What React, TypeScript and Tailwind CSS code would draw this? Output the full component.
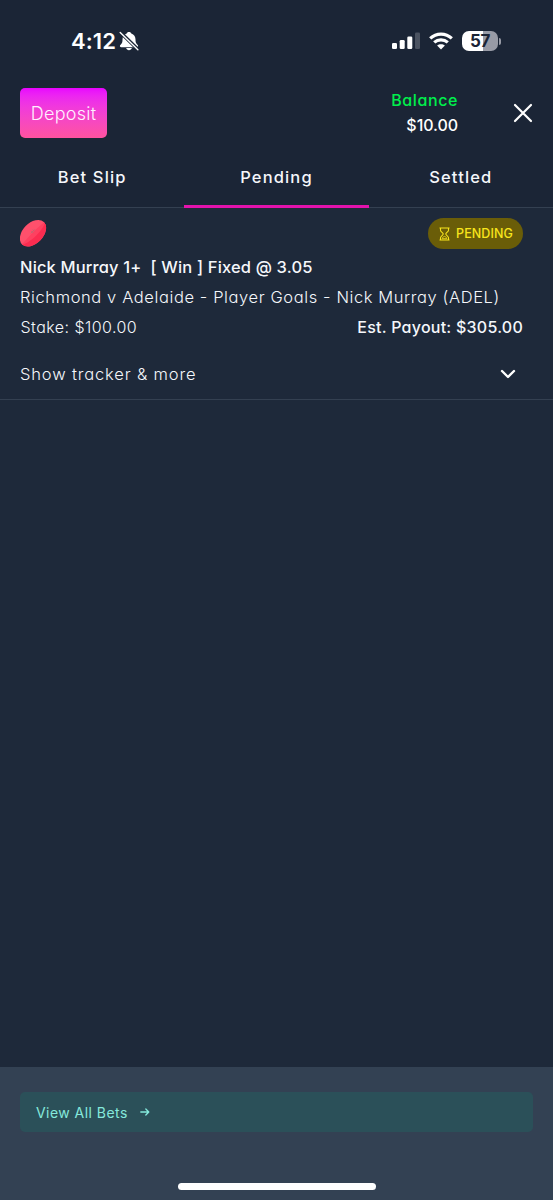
import type { ReactNode } from "react";

function BellOff() {
  return (
    <svg width="20" height="20" viewBox="0 0 20 20" className="block">
      <path
        d="M10 .9c-1.300 0-2.100.7-2.300 1.700C4.900 3.500 3.500 5.800 3.500 8.600c0 2.900-.4 3.700-1.700 5-.6.6-.9 1-.9 1.500 0 .6.500 1.100 1.200 1.100h15.800c.7 0 1.200-.5 1.200-1.100 0-.5-.3-.9-.9-1.500-1.300-1.300-1.700-2.100-1.700-5 0-2.800-1.400-5.100-4.200-6C12.100 1.600 11.300.9 10 .9zM7.200 17.100c.3 1.300 1.400 2.200 2.800 2.200s2.500-.9 2.800-2.200z"
        fill="#fff"
      />
      <path d="M1.600 1.500L19 18.500" stroke="#1b2536" strokeWidth="3.600" />
      <path d="M1.200 1.600L18.900 18.800" stroke="#fff" strokeWidth="1.400" strokeLinecap="round" />
    </svg>
  );
}

function Signal() {
  return (
    <svg width="28" height="18" viewBox="0 0 28 18" fill="#fff" className="block">
      <rect x="0" y="11" width="5" height="6" rx="1.300" />
      <rect x="7.700" y="8" width="5" height="9" rx="1.300" />
      <rect x="15.300" y="4.500" width="5" height="12.500" rx="1.300" />
      <rect x="23" y="0.500" width="5" height="16.500" rx="1.300" fill="#4b5361" />
    </svg>
  );
}

function Wifi() {
  return (
    <svg width="24" height="18" viewBox="0 0 24 18" fill="none" stroke="#fff" strokeWidth="3.200" className="block">
      <path d="M1.200 6.300C7.300.6 16.700.6 22.800 6.300" />
      <path d="M5.200 10.400c3.900-3.500 9.700-3.500 13.600 0" />
      <path d="M12 17.600L8.100 13.600c2.200-1.900 5.600-1.900 7.800 0z" fill="#fff" stroke="none" />
    </svg>
  );
}

function Battery() {
  return (
    <div className="flex items-center gap-px">
      <div className="flex h-[20px] w-[36px] items-center justify-center rounded-[7px] bg-[linear-gradient(90deg,#fff_57%,#989ba6_57%)] text-[17px] leading-none font-bold tracking-[-0.5px] text-[#1b2435]">
        57
      </div>
      <div className="h-[7px] w-[2px] rounded-r-full bg-[#989ba6]" />
    </div>
  );
}

function Football() {
  return (
    <svg width="27" height="28" viewBox="0 0 27 28" className="block">
      <defs>
        <clipPath id="ball">
          <ellipse rx="15.600" ry="10.200" transform="translate(13 14.200) rotate(-46)" />
        </clipPath>
      </defs>
      <g clipPath="url(#ball)">
        <rect width="27" height="28" fill="#ff506c" />
        <path d="M0 27.500L27 1v27z" fill="#fb2c50" />
        <path d="M1 26.500C10 23.500 23 12.500 25.500 2L14 12z" fill="#ff4060" />
      </g>
      <path d="M10.800 14.300l3.800-3.800M11.300 12l2.300 2.300M12.800 10.500l1.900 1.900" stroke="#c9616f" strokeWidth="1" />
    </svg>
  );
}

function Hourglass() {
  return (
    <svg width="11" height="14" viewBox="0 0 11 14" fill="none" stroke="#f8e51c" strokeWidth="1.100" className="block">
      <path d="M.5 1h10M.5 13h10M1.500 1v2.200c0 1.600 2.700 2.700 2.700 3.800s-2.700 2.200-2.700 3.800V13M9.500 1v2.200C9.500 4.800 6.800 5.900 6.800 7s2.700 2.200 2.700 3.800V13" />
      <path d="M3.200 11.700c.4-1.600 1.500-2.300 2.300-2.300s1.900.7 2.300 2.300z" stroke="#f8e51c" strokeWidth=".8" />
    </svg>
  );
}

function Tab({ children, active = false }: { children: ReactNode; active?: boolean }) {
  return (
    <div className="relative flex flex-1 justify-center pt-[9px] text-[16.5px] leading-6 font-[450] tracking-[1.15px]">
      {children}
      {active && <div className="absolute inset-x-0 -bottom-px h-[3px] bg-[#e313ad]" />}
    </div>
  );
}

export default function App() {
  return (
    <div className="flex h-[1200px] w-[553px] flex-col overflow-hidden bg-[#1e293a] font-['Inter','Noto_Sans',sans-serif] whitespace-nowrap text-[#f5f7fb]">
      <header className="flex h-[208px] shrink-0 flex-col border-b border-[#344051] bg-[#1b2536]">
        <div className="flex h-[82px] items-center justify-between pr-[52px] pl-[71px]">
          <div className="flex items-center gap-[3px]">
            <span className="text-[22px] leading-none font-semibold tracking-[0.1px] text-white">4:12</span>
            <BellOff />
          </div>
          <div className="flex items-center gap-[9px]">
            <Signal />
            <Wifi />
            <Battery />
          </div>
        </div>
        <div className="flex h-[74px] items-start pt-[6px] pr-[20px] pl-[20px] [font-feature-settings:'cv11']">
          <button className="flex h-[50px] w-[87px] items-center justify-center rounded-[5px] bg-linear-to-b from-[#e900ff] to-[#ff529f] text-[18px] font-[350] tracking-[0.25px] text-[#fff0ff]">
            Deposit
          </button>
          <div className="ml-auto flex w-[66px] flex-col items-end text-[16px] leading-[25px] font-[450]">
            <span className="tracking-[0.6px] text-[#00ef4c]">Balance</span>
            <span className="font-medium tracking-[-0.05px] text-white">$10.00</span>
          </div>
          <svg width="20" height="20" viewBox="0 0 20 20" className="mt-[15px] ml-[55px] block">
            <path d="M2 2l16 16M18 2L2 18" stroke="#fff" strokeWidth="2.200" strokeLinecap="round" />
          </svg>
        </div>
        <nav className="flex flex-1 [font-feature-settings:'cv11']">
          <Tab>Bet Slip</Tab>
          <Tab active>Pending</Tab>
          <Tab>Settled</Tab>
        </nav>
      </header>

      <main className="flex flex-1 flex-col [font-feature-settings:'cv11']">
        <article className="flex h-[192px] flex-col border-b border-[#344051] pt-[10px] pr-[30px] pl-[20px]">
          <div className="flex items-start justify-between">
            <div className="pt-px">
              <Football />
            </div>
            <div className="flex h-[31px] w-[95px] items-center justify-center gap-[6px] rounded-full bg-[#6a5d08] pt-px pl-px text-[12.5px] font-medium tracking-[0.1px] text-[#f8e51c]">
              <Hourglass />
              PENDING
            </div>
          </div>
          <div className="mt-[3px] text-[16.5px] leading-[30px] font-medium tracking-[0.15px] whitespace-pre">
            Nick Murray 1+  [ Win ] Fixed @ 3.05
          </div>
          <div className="text-[16.5px] leading-[30px] font-light tracking-[0.6px]">
            Richmond v Adelaide - Player Goals - Nick Murray (ADEL)
          </div>
          <div className="flex justify-between text-[16px] leading-[30px]">
            <span className="pl-[0.5px] font-light tracking-[0.45px]">Stake: $100.00</span>
            <span className="font-medium tracking-[0.25px]">Est. Payout: $305.00</span>
          </div>
          <div className="flex items-center justify-between pt-[17px] pr-[6px] text-[16.5px] leading-[30px] font-light tracking-[0.85px]">
            <span>Show tracker &amp; more</span>
            <svg width="18" height="12" viewBox="0 0 18 12" className="block">
              <path d="M3 3l6 6 6-6" fill="none" stroke="#fff" strokeWidth="2.400" strokeLinecap="round" strokeLinejoin="round" />
            </svg>
          </div>
        </article>
      </main>

      <footer className="flex h-[133px] shrink-0 flex-col items-center bg-[#334153] px-[20px] pt-[25px] [font-feature-settings:'cv11']">
        <button className="flex h-[40px] w-full items-center rounded-[5px] bg-[#2b5059] pl-[16px] text-[14px] tracking-[0.45px] text-[#85e9dc]">
          View All Bets
          <svg width="10" height="10" viewBox="0 0 10 10" className="ml-[12px] block">
            <path d="M.8 5h8M5.800 2l3 3-3 3" fill="none" stroke="#85e9dc" strokeWidth="1.300" strokeLinecap="round" strokeLinejoin="round" />
          </svg>
        </button>
        <div className="mt-[51px] h-[7px] w-[198px] rounded-full bg-white" />
      </footer>
    </div>
  );
}
